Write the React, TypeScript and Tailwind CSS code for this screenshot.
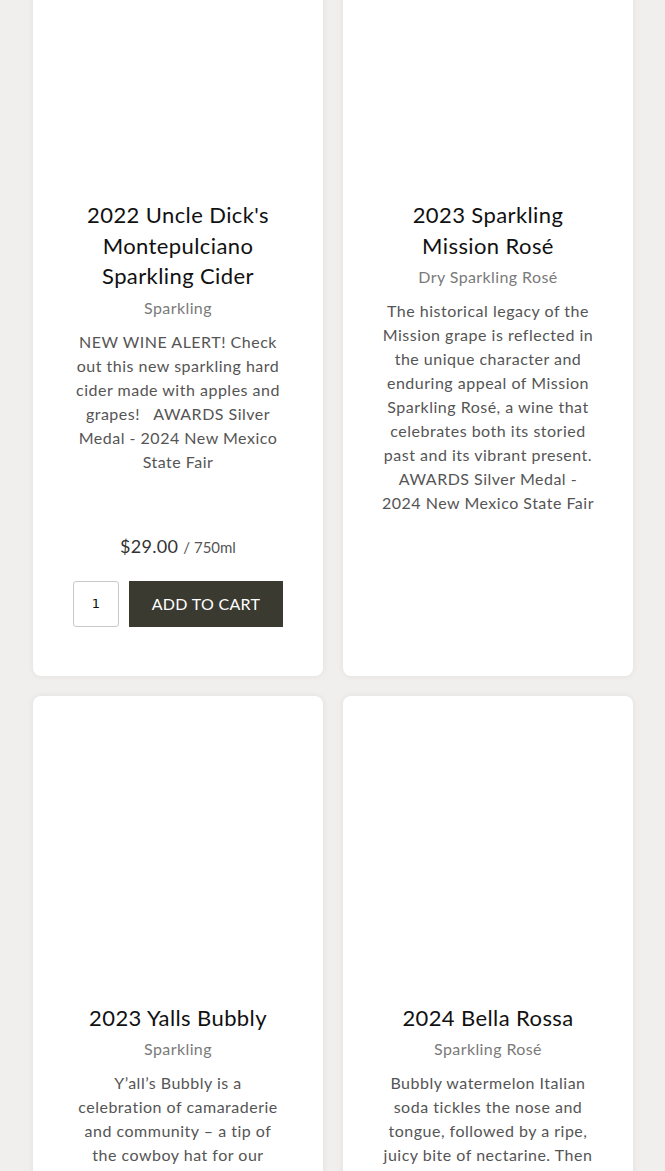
import React from "react";

const font = { fontFamily: "Lato, 'Open Sans', sans-serif" };

function Lines({ lines }: { lines: string[] }) {
  return (
    <>
      {lines.map((l, i) => (
        <span key={i} className="block whitespace-pre">
          {l}
        </span>
      ))}
    </>
  );
}

type Wine = {
  title: string[];
  sub: string;
  desc: string[];
  price?: boolean;
};

function Card({ w }: { w: Wine }) {
  return (
    <div className="flex flex-col rounded-[8px] bg-white shadow-[0_0_6px_rgba(0,0,0,0.07)]">
      <div className="h-[307px]" />
      <div className="flex flex-col items-center px-[20px] pb-[49px] text-center">
        <h2 className="text-[22px] leading-[30.5px] tracking-[0.4px] text-[#111111]">
          <Lines lines={w.title} />
        </h2>
        <div className="mt-[4px] text-[16px] leading-[24px] tracking-[0.4px] text-[#7a7a7a]">{w.sub}</div>
        <div className="mt-[10px] text-[16px] leading-[24px] tracking-[0.5px] text-[#555555]">
          <Lines lines={w.desc} />
        </div>
        {w.price && (
          <>
            <div className="mt-[58px] flex items-baseline gap-[5px] leading-[28px]">
              <span className="text-[18px] tracking-[0.3px] text-[#333333]">$29.00</span>
              <span className="text-[15px] text-[#555555]">/ 750ml</span>
            </div>
            <div className="mt-[20px] flex gap-[10px]">
              <input
                defaultValue="1"
                className="h-[46px] w-[46px] rounded-[3px] border border-[#c8c8c8] bg-white text-center text-[13px] text-[#111]"
                style={{ fontFamily: "'DejaVu Sans', sans-serif" }}
              />
              <button className="h-[46px] w-[154px] bg-[#3a3a30] text-[16px] tracking-[0.3px] text-white">
                ADD TO CART
              </button>
            </div>
          </>
        )}
      </div>
    </div>
  );
}

const wines: Wine[] = [
  {
    title: ["2022 Uncle Dick's", "Montepulciano", "Sparkling Cider"],
    sub: "Sparkling",
    desc: [
      "NEW WINE ALERT! Check",
      "out this new sparkling hard",
      "cider made with apples and",
      "grapes!\u00a0\u00a0 AWARDS Silver",
      "Medal - 2024 New Mexico",
      "State Fair",
    ],
    price: true,
  },
  {
    title: ["2023 Sparkling", "Mission Rosé"],
    sub: "Dry Sparkling Rosé",
    desc: [
      "The historical legacy of the",
      "Mission grape is reflected in",
      "the unique character and",
      "enduring appeal of Mission",
      "Sparkling Rosé, a wine that",
      "celebrates both its storied",
      "past and its vibrant present.",
      "AWARDS Silver Medal -",
      "2024 New Mexico State Fair",
    ],
  },
  {
    title: ["2023 Yalls Bubbly"],
    sub: "Sparkling",
    desc: [
      "Y’all’s Bubbly is a",
      "celebration of camaraderie",
      "and community – a tip of",
      "the cowboy hat for our",
      "friends and neighbors.",
    ],
  },
  {
    title: ["2024 Bella Rossa"],
    sub: "Sparkling Rosé",
    desc: [
      "Bubbly watermelon Italian",
      "soda tickles the nose and",
      "tongue, followed by a ripe,",
      "juicy bite of nectarine. Then",
      "comes a refreshing finish.",
    ],
  },
];

export default function App() {
  return (
    <div className="h-[1171px] overflow-hidden bg-[#f0efed]" style={font}>
      <div className="mt-[-107px] grid grid-cols-[290px_290px] gap-[20px] pl-[33px]">
        {wines.map((w, i) => (
          <Card key={i} w={w} />
        ))}
      </div>
    </div>
  );
}
